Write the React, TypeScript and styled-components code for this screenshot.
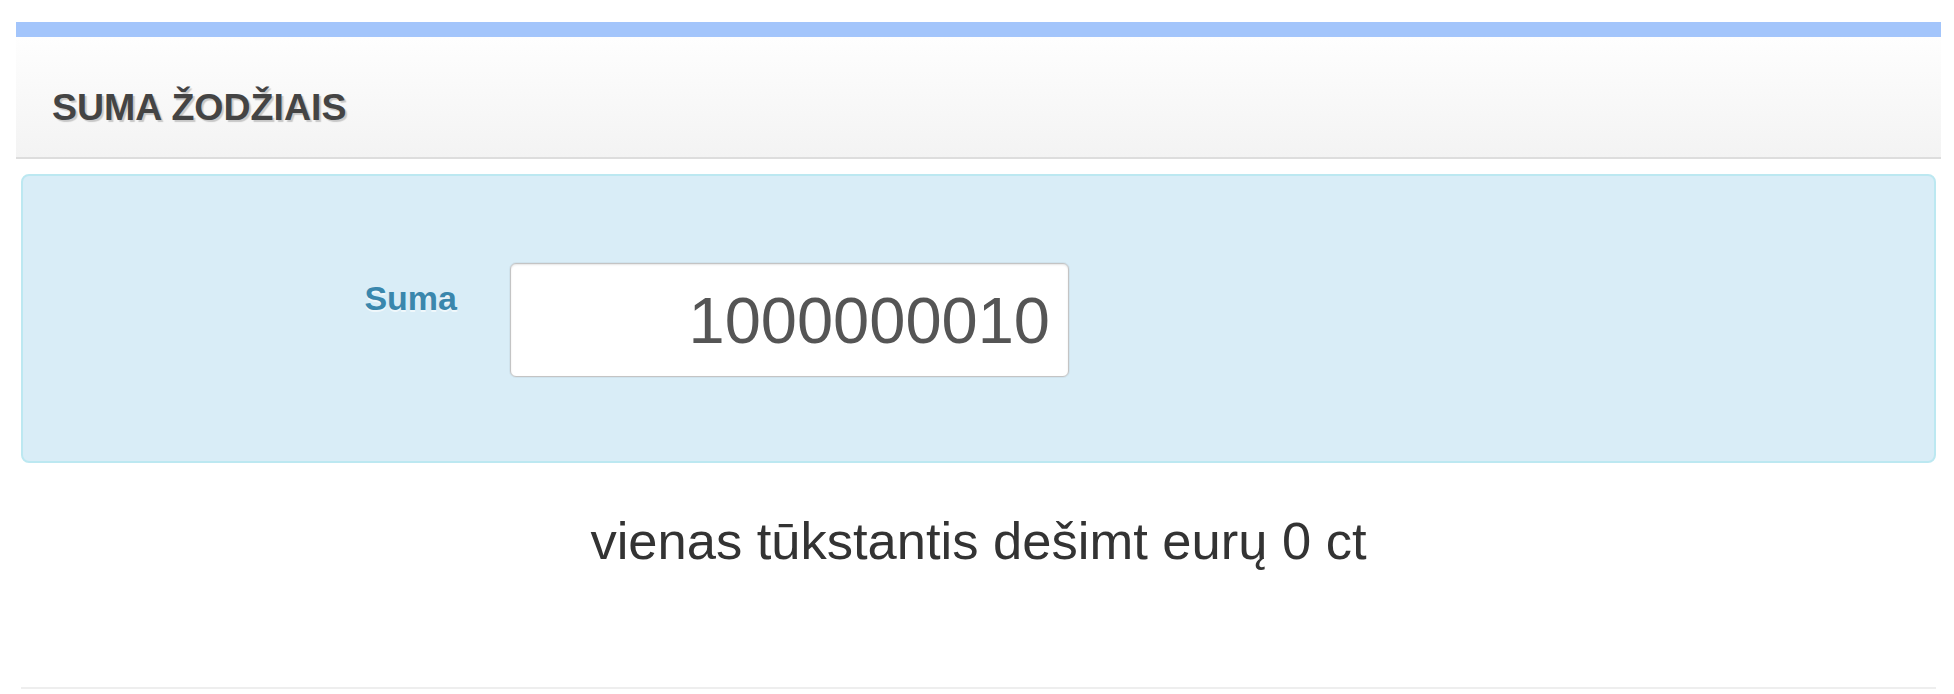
import React from "react";
import styled, { createGlobalStyle } from "styled-components";

const GlobalStyle = createGlobalStyle`
  html, body {
    margin: 0;
    padding: 0;
    background: #ffffff;
    font-family: "Liberation Sans", Arial, Helvetica, sans-serif;
  }
`;

const Page = styled.div`
  padding: 22px 13px 0 16px;
`;

const Card = styled.section`
  border-top: 15px solid #a3c5fb;
  display: flex;
  flex-direction: column;
`;

const Header = styled.header`
  box-sizing: border-box;
  height: 122px;
  padding: 49px 0 0 36px;
  background: linear-gradient(to bottom, #fefefe 0%, #f3f3f3 100%);
  border-bottom: 2px solid #dddddd;
`;

const Title = styled.h2`
  margin: 0;
  font-size: 37.5px;
  line-height: 1.15;
  font-weight: 700;
  color: #444444;
  text-shadow: 2px 2px 1px #c8c8c8;
`;

const Body = styled.div`
  padding: 15px 5px 0 5px;
  display: flex;
  flex-direction: column;
`;

const InfoBox = styled.div`
  box-sizing: border-box;
  height: 289px;
  background: #d9edf7;
  border: 2px solid #bce8f1;
  border-radius: 8px;
  padding: 87px 0 0 0;
`;

const FormRow = styled.div`
  display: flex;
  align-items: flex-start;
  gap: 53px;
`;

const Label = styled.label`
  width: 434px;
  margin-top: 16px;
  text-align: right;
  font-size: 34px;
  line-height: 1.15;
  font-weight: 700;
  color: #3a87ad;
  text-shadow: 0 2px 0 rgba(255, 255, 255, 0.6);
`;

const AmountInput = styled.input`
  box-sizing: border-box;
  width: 559px;
  height: 114px;
  padding: 0 18px 0 10px;
  border: 1px solid #c4c4c4;
  border-radius: 6px;
  background: #ffffff;
  box-shadow: inset 0 1px 2px rgba(0, 0, 0, 0.1), 0 0 0 1px rgba(0, 0, 0, 0.04);
  font-family: "Liberation Sans", Arial, Helvetica, sans-serif;
  font-size: 65px;
  color: #555555;
  text-align: right;
  outline: none;
`;

const Result = styled.p`
  margin: 48px 0 0 0;
  text-align: center;
  font-size: 52.5px;
  line-height: 1.15;
  color: #333333;
`;

const Footer = styled.div`
  margin-top: 116px;
  height: 2px;
  background: #eeeeee;
`;

export default function App() {
  return (
    <>
      <GlobalStyle />
      <Page>
        <Card>
          <Header>
            <Title>SUMA ŽODŽIAIS</Title>
          </Header>
          <Body>
            <InfoBox>
              <FormRow>
                <Label htmlFor="suma">Suma</Label>
                <AmountInput id="suma" type="text" defaultValue="1000000010" />
              </FormRow>
            </InfoBox>
            <Result>vienas tūkstantis dešimt eurų 0 ct</Result>
            <Footer />
          </Body>
        </Card>
      </Page>
    </>
  );
}
